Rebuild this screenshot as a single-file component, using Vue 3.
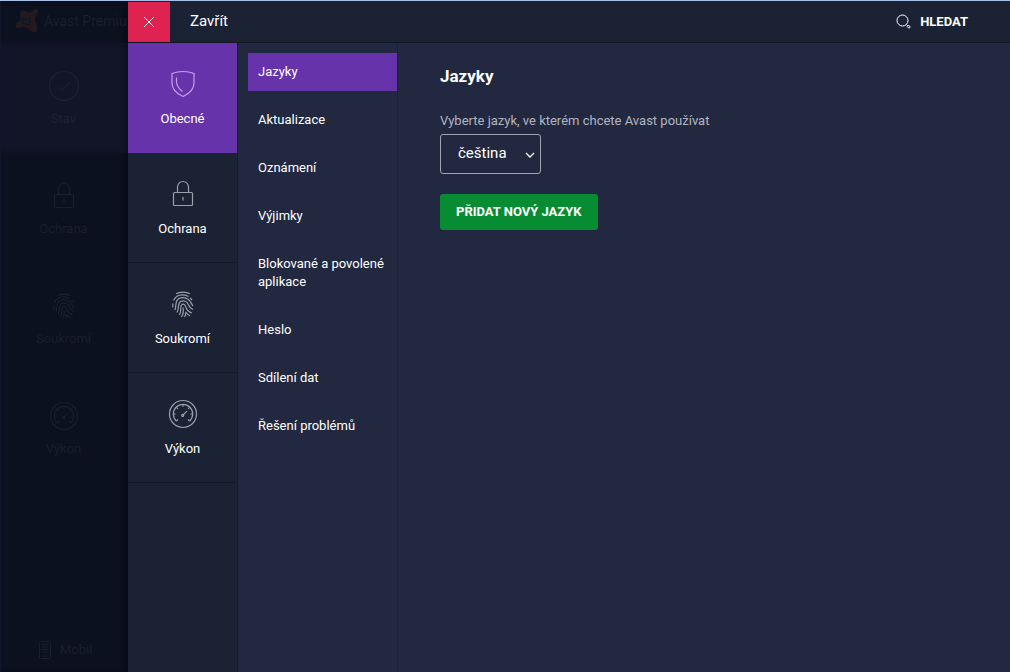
<script setup>
import { ref } from 'vue'

const sections = [
  { id: 'shield', label: 'Obecné' },
  { id: 'lock', label: 'Ochrana' },
  { id: 'finger', label: 'Soukromí' },
  { id: 'gauge', label: 'Výkon' },
]
const backdrop = [
  { id: 'check', label: 'Stav' },
  { id: 'lock', label: 'Ochrana' },
  { id: 'finger', label: 'Soukromí' },
  { id: 'gauge', label: 'Výkon' },
]
const pages = [
  'Jazyky',
  'Aktualizace',
  'Oznámení',
  'Výjimky',
  'Blokované a povolené aplikace',
  'Heslo',
  'Sdílení dat',
  'Řešení problémů',
]
const section = ref('shield')
const page = ref('Jazyky')
const language = ref('cs')
</script>

<template>
  <div class="window">
    <svg class="defs" aria-hidden="true">
      <symbol id="shield" viewBox="0 0 32 32">
        <path d="M5 5.500Q16 1.500 27 5.500V15C27 21 22.500 25.500 16 28.500C9.500 25.500 5 21 5 15Z" />
        <path d="M9.500 9.500V14C10 18 12 21 15.500 23.500" />
      </symbol>
      <symbol id="lock" viewBox="0 0 32 32">
        <rect x="6.500" y="14.500" width="19" height="13" rx="1" />
        <path d="M10.500 14.500V9a5.500 5.500 0 0 1 11 0v5.500M16 19v3.500" />
      </symbol>
      <symbol id="finger" viewBox="0 0 32 32">
        <g transform="translate(5 3)">
          <path d="M4 2.700C8 .5 14 .5 18 2.700" />
          <path d="M1.500 9.500C3.500 4.800 8 3.700 11 3.800C13 3.900 15 4.500 16.500 5.500M18 6.800L20 9" />
          <path d="M.8 12.500V16.500" />
          <path d="M3 19C4.800 14 2.500 10 7 7.500C11 5.500 16 7 18 10.300C19.500 12 20 13.500 20.800 15" />
          <path d="M5 21.500C7.800 17 5 12.500 8.700 10.400C12 9 15 10.500 16 13C17 16 19 17.500 21 18.500" />
          <path d="M7.500 24C10 19 7.500 15 10 13.400C12.500 12.500 13.500 14.500 14 16.500C15 19.500 17 21 20 22" />
          <path d="M9.500 26C11.800 22.500 11.500 19 11 16.500" />
          <path d="M12.500 26C14 24 13.500 22 14 21.500C15 23 16.500 24 18 25" />
        </g>
      </symbol>
      <symbol id="gauge" viewBox="0 0 32 32">
        <circle cx="16" cy="16" r="13.500" />
        <path d="M9.500 23.200A9.700 9.700 0 1 1 22.500 23.200" />
        <path d="M9.500 23.200l1.500-1.900M6.300 16h2.400M9.200 9.200l1.700 1.700M16 6.300v2.400M22.800 9.200l-1.700 1.700M25.700 16h-2.400M22.500 23.200L21 21.300M16 17.200l4-4" />
        <circle cx="15.700" cy="17.400" r="1" />
      </symbol>
      <symbol id="check" viewBox="0 0 32 32">
        <circle cx="16" cy="16" r="14.500" />
        <path d="M10 17l4 3.500 8-8" />
      </symbol>
    </svg>

    <aside class="behind" aria-hidden="true">
      <div class="brand">
        <svg class="logo" viewBox="0 0 24 26">
          <path d="M5 5C5 1 10 2 13 4C17 6 18 0 22 1C24 2 23 6 21 8C19 11 21 14 22 18C23 22 22 26 18 24C14 22 13 20 10 19C7 18 5 21 2 20C-1 18 1 15 4 13C7 11 5 8 5 5Z" />
          <path class="cut" d="M9 9.500A4 4 0 1 0 15.500 13.500M9 11.500H13M15 9v5" />
        </svg>
        <span>Avast Premiu</span>
      </div>
      <div v-for="(b, i) in backdrop" :key="b.id" class="ghost" :class="{ first: i === 0 }">
        <svg class="icon"><use :href="'#' + b.id" /></svg>
        <span>{{ b.label }}</span>
      </div>
      <div class="mobile">
        <svg viewBox="0 0 12 18">
          <rect x=".5" y=".5" width="11" height="17" rx="1" />
          <path d="M2.500 3.500h7M2.500 6h7M2.500 8.500h7M2.500 11h7M4 15h4" />
        </svg>
        <span>Mobil</span>
      </div>
    </aside>

    <div class="settings">
      <header class="bar">
        <button class="close" type="button" aria-label="Zavřít">
          <svg viewBox="0 0 12 12"><path d="M1 1l10 10M11 1L1 11" /></svg>
        </button>
        <span class="bar-title">Zavřít</span>
        <button class="search" type="button">
          <svg viewBox="0 0 15 15">
            <circle cx="6.500" cy="6.500" r="5.500" />
            <path d="M10.500 10.500l1 1M11 12.300l1.300-1.300 2 2-1.300 1.300z" />
          </svg>
          <span>HLEDAT</span>
        </button>
      </header>

      <div class="body">
        <nav class="rail">
          <button
            v-for="s in sections"
            :key="s.id"
            type="button"
            class="tile"
            :class="{ active: s.id === section }"
            @click="section = s.id"
          >
            <svg class="icon"><use :href="'#' + s.id" /></svg>
            <span>{{ s.label }}</span>
          </button>
        </nav>

        <nav class="menu">
          <a
            v-for="p in pages"
            :key="p"
            href="#"
            :class="{ active: p === page }"
            @click.prevent="page = p"
          >{{ p }}</a>
        </nav>

        <main class="content">
          <h1>Jazyky</h1>
          <label for="language">Vyberte jazyk, ve kterém chcete Avast používat</label>
          <div class="picker">
            <select id="language" v-model="language">
              <option value="cs">čeština</option>
            </select>
            <svg viewBox="0 0 10 6"><path d="M1 1l4 4 4-4" /></svg>
          </div>
          <button class="add" type="button">PŘIDAT NOVÝ JAZYK</button>
        </main>
      </div>
    </div>
  </div>
</template>

<style>
body {
  margin: 0;
  background: #21283f;
}
</style>

<style scoped>
.window {
  box-sizing: border-box;
  display: grid;
  grid-template-columns: 128px minmax(0, 1fr);
  min-height: 100vh;
  border-top: 1px solid #a5c0e6;
  font: 13px/18px "Roboto", "Liberation Sans", sans-serif;
  color: #fff;
}
.defs {
  position: absolute;
  width: 0;
  height: 0;
}
svg {
  display: block;
  flex: none;
  fill: none;
  stroke: currentColor;
}
button {
  margin: 0;
  padding: 0;
  border: 0;
  background: none;
  color: inherit;
  font: inherit;
  cursor: pointer;
}
.icon {
  width: 32px;
  height: 32px;
  stroke-width: 1.2;
}

.behind {
  display: flex;
  flex-direction: column;
  border-left: 1px solid #11172a;
  background: #0b111e;
  color: #191f2c;
  box-shadow: inset -4px 0 4px #090b18;
}
.brand {
  display: flex;
  align-items: center;
  box-sizing: border-box;
  gap: 5px;
  height: 42px;
  padding: 0 0 2px 14px;
  font-size: 14px;
  white-space: nowrap;
}
.logo {
  width: 24px;
  height: 26px;
  fill: #211a1e;
  stroke: none;
}
.logo .cut {
  fill: none;
  stroke: #131725;
  stroke-width: 2;
}
.ghost {
  display: flex;
  flex-direction: column;
  align-items: center;
  box-sizing: border-box;
  height: 110px;
  padding: 27px 2px 0 0;
  gap: 8px;
}
.ghost.first {
  background: #121427;
  color: #1c2031;
  box-shadow: inset -4px 0 4px #0e1022;
}
.mobile {
  display: flex;
  align-items: center;
  gap: 9px;
  margin-top: auto;
  padding: 0 0 13px 38px;
}
.mobile svg {
  width: 12px;
  height: 18px;
}

.settings {
  display: flex;
  flex-direction: column;
}
.bar {
  display: flex;
  align-items: center;
  box-sizing: border-box;
  height: 42px;
  padding: 1px 42px 1px 0;
  border-bottom: 1px solid #101728;
  background: #1a2234;
}
.close {
  display: grid;
  place-items: center;
  width: 42px;
  height: 40px;
  background: #df2351;
}
.close svg {
  width: 12px;
  height: 12px;
}
.bar-title {
  margin-left: 20px;
  padding-bottom: 2px;
  font-size: 15px;
}
.search {
  display: flex;
  align-items: center;
  gap: 9px;
  margin-left: auto;
  font-weight: 700;
}
.search svg {
  width: 15px;
  height: 15px;
}

.body {
  display: grid;
  flex: 1;
  grid-template-columns: 110px 160px minmax(0, 1fr);
}
.rail {
  border-right: 1px solid #151c2e;
  background: #1a2234;
}
.tile {
  display: flex;
  flex-direction: column;
  align-items: center;
  box-sizing: border-box;
  width: 100%;
  height: 110px;
  padding-top: 25px;
  gap: 10px;
  border-bottom: 1px solid #131a2a;
}
.tile.active {
  border-bottom-color: #6733aa;
  background: #6733aa;
}
.tile .icon {
  color: #9a9faa;
}
.tile.active .icon {
  color: #c4a2f0;
}
.menu {
  display: flex;
  flex-direction: column;
  gap: 10px;
  padding: 10px 0 10px 10px;
  border-right: 1px solid #1b2237;
}
.menu a {
  padding: 10px;
  color: #fff;
  text-decoration: none;
}
.menu a.active {
  background: #6733aa;
}
.content {
  display: flex;
  flex-direction: column;
  align-items: flex-start;
  padding: 21px 42px;
}
h1 {
  margin: 0 0 24px;
  font-size: 17px;
  line-height: 24px;
  font-weight: 700;
}
label {
  line-height: 18px;
  margin-bottom: 4px;
  color: #b1b5c2;
}
.picker {
  position: relative;
  margin-bottom: 20px;
}
.picker select {
  appearance: none;
  box-sizing: border-box;
  height: 40px;
  padding: 0 33px 2px 17px;
  border: 1px solid #a0a5b4;
  border-radius: 3px;
  background: transparent;
  color: #fff;
  font: inherit;
  font-size: 15px;
}
.picker svg {
  position: absolute;
  right: 6px;
  top: 18px;
  width: 10px;
  height: 6px;
  stroke-width: 1.3;
  pointer-events: none;
}
.add {
  height: 36px;
  padding: 0 16px;
  border-radius: 3px;
  background: #078b33;
  font-weight: 700;
}
</style>
